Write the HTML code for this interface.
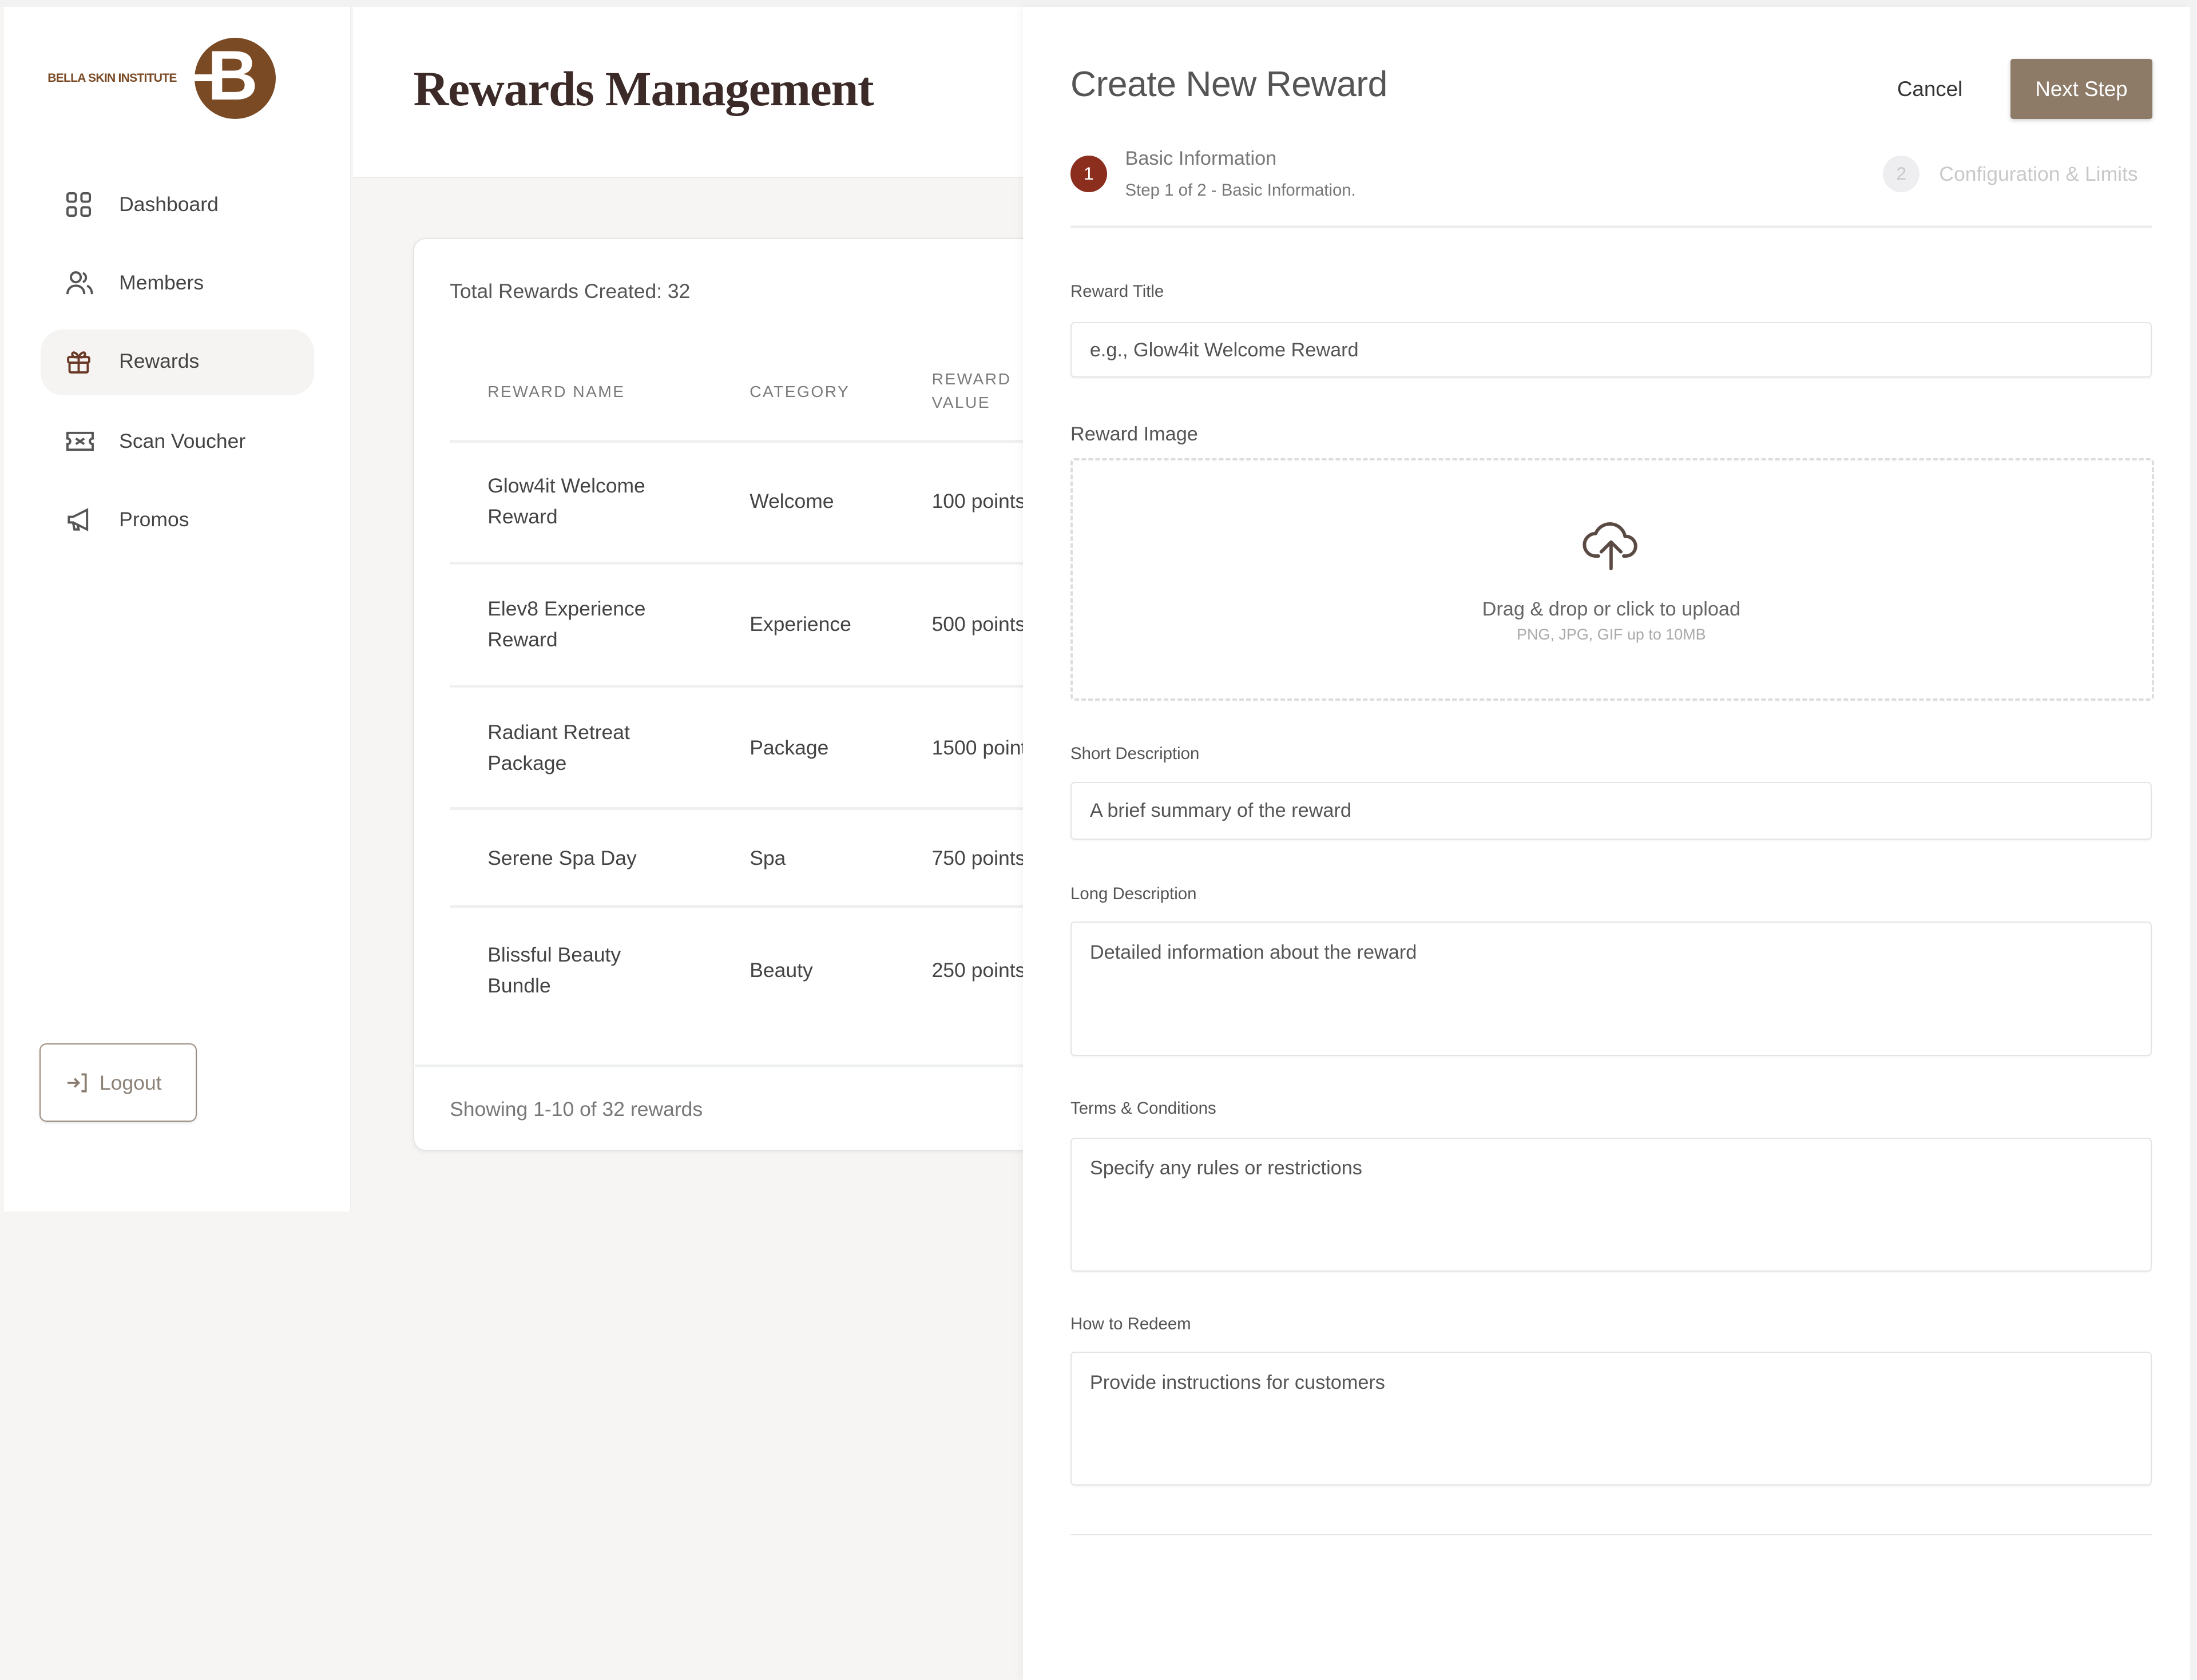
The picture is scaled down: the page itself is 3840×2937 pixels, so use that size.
<!DOCTYPE html>
<html><head><meta charset="utf-8"><style>
html,body{margin:0;padding:0;width:3840px;height:2937px;overflow:hidden;background:#f6f5f3;}
#w{position:relative;width:1568px;height:1200px;zoom:2.44898;font-family:"Liberation Sans",sans-serif;background:#f6f5f3;overflow:hidden;}
.a{position:absolute;white-space:nowrap;}
.nav{font-size:14.5px;color:#444;line-height:20px;}
.hd{font-size:11.5px;color:#7a7a7a;letter-spacing:1px;line-height:17px;}
.td{font-size:14.5px;color:#444;line-height:22px;}
.hr{position:absolute;left:321px;width:420px;height:2px;background:#eef0f2;}
.lbl{font-size:12px;color:#555;line-height:16px;}
.inp{position:absolute;left:764px;width:770px;border:1px solid #e4e4e4;border-radius:3px;background:#fff;box-shadow:0 1px 1px rgba(0,0,0,.04);}
.ph{position:absolute;left:13px;font-size:14px;color:#555;line-height:18px;}
</style></head><body><div id="w">
<div class="a" style="left:0;top:0;width:1568px;height:5px;background:#f2f2f2"></div>
<div class="a" style="left:3px;top:5px;width:247px;height:860px;background:#fff;border-right:1px solid #eee"></div>
<div class="a" style="left:139px;top:27px;width:58px;height:58px;border-radius:50%;background:#7a4a25"></div>
<div class="a" style="left:130px;top:53px;width:24px;height:5px;background:#fff"></div>
<div class="a" style="left:34px;top:51px;font-size:8.6px;font-weight:bold;color:#7a4a25;letter-spacing:-.3px;line-height:10px">BELLA SKIN INSTITUTE</div>
<div class="a" style="left:148px;top:24px;font-size:50px;line-height:60px;font-weight:bold;color:#fff">B</div>
<div class="a" style="left:29px;top:235px;width:195px;height:47px;border-radius:16px;background:#f6f4f2"></div>
<svg class="a" style="left:46px;top:136px" width="20" height="20" viewBox="0 0 20 20" fill="none" stroke="#555" stroke-width="1.6"><rect x="2" y="2" width="6" height="6" rx="1.5"/><rect x="12" y="2" width="6" height="6" rx="1.5"/><rect x="2" y="12" width="6" height="6" rx="1.5"/><rect x="12" y="12" width="6" height="6" rx="1.5"/></svg>
<div class="a nav" style="left:85px;top:136px">Dashboard</div>
<svg class="a" style="left:46px;top:192px" width="22" height="20" viewBox="0 0 22 20" fill="none" stroke="#555" stroke-width="1.6"><circle cx="8" cy="6" r="3.5"/><path d="M2 18c0-4 3-6 6-6s6 2 6 6"/><path d="M13 3a3.5 3.5 0 0 1 0 6.5M16 12c2 1 3.5 3 3.5 6"/></svg>
<div class="a nav" style="left:85px;top:192px">Members</div>
<svg class="a" style="left:46px;top:248px" width="20" height="20" viewBox="0 0 20 20" fill="none" stroke="#6a3a28" stroke-width="1.6"><rect x="2.5" y="7" width="15" height="4" rx="1"/><rect x="3.5" y="11" width="13" height="7" rx="1"/><path d="M10 7v11"/><path d="M10 7C8 3 5 3 5.5 5.5S10 7 10 7zM10 7c2-4 5-4 4.5-1.5S10 7 10 7z"/></svg>
<div class="a nav" style="left:85px;top:248px">Rewards</div>
<svg class="a" style="left:46px;top:305px" width="22" height="20" viewBox="0 0 22 20" fill="none" stroke="#555" stroke-width="1.6"><path d="M2 4h18v4a2 2 0 0 0 0 4v4H2v-4a2 2 0 0 0 0-4z"/><path d="M8 8l6 4M8 12l6-4"/></svg>
<div class="a nav" style="left:85px;top:305px">Scan Voucher</div>
<svg class="a" style="left:46px;top:361px" width="22" height="20" viewBox="0 0 22 20" fill="none" stroke="#555" stroke-width="1.6"><path d="M3 8v4h3l10 5V3L6 8z"/><path d="M6 12l1 5h3l-1-4"/></svg>
<div class="a nav" style="left:85px;top:361px">Promos</div>
<div class="a" style="left:28px;top:745px;width:111px;height:54px;border:1px solid #9a8c7e;border-radius:5px;box-shadow:0 1px 2px rgba(0,0,0,.1)"></div>
<svg class="a" style="left:46px;top:764px" width="18" height="18" viewBox="0 0 18 18" fill="none" stroke="#8a7c6e" stroke-width="1.5"><path d="M2 9h8M7 6l3 3-3 3M12 3h3v12h-3"/></svg>
<div class="a" style="left:71px;top:763px;font-size:14.5px;color:#8a8075;line-height:20px">Logout</div>
<div class="a" style="left:252px;top:5px;width:480px;height:121px;background:#fff;border-bottom:1px solid #ececec"></div>
<div class="a" style="left:295px;top:41px;font-family:'Liberation Serif',serif;font-size:35px;line-height:46px;color:#3b2a27;font-weight:bold;letter-spacing:-.5px">Rewards Management</div>
<div class="a" style="left:295px;top:170px;width:460px;height:650px;background:#fff;border:1px solid #e6e6e6;border-radius:9px;box-shadow:0 1px 3px rgba(0,0,0,.06)"></div>
<div class="a" style="left:321px;top:198px;font-size:14.5px;color:#555;line-height:20px">Total Rewards Created: 32</div>
<div class="a hd" style="left:348px;top:271px">REWARD NAME</div>
<div class="a hd" style="left:535px;top:271px">CATEGORY</div>
<div class="a hd" style="left:665px;top:262px">REWARD<br>VALUE</div>
<div class="hr" style="top:314px"></div>
<div class="a td" style="left:348px;top:336px">Glow4it Welcome<br>Reward</div><div class="a td" style="left:535px;top:347px">Welcome</div><div class="a td" style="left:665px;top:347px">100 points</div>
<div class="hr" style="top:401px"></div>
<div class="a td" style="left:348px;top:424px">Elev8 Experience<br>Reward</div><div class="a td" style="left:535px;top:435px">Experience</div><div class="a td" style="left:665px;top:435px">500 points</div>
<div class="hr" style="top:489px"></div>
<div class="a td" style="left:348px;top:512px">Radiant Retreat<br>Package</div><div class="a td" style="left:535px;top:523px">Package</div><div class="a td" style="left:665px;top:523px">1500 points</div>
<div class="hr" style="top:576px"></div>
<div class="a td" style="left:348px;top:602px">Serene Spa Day</div><div class="a td" style="left:535px;top:602px">Spa</div><div class="a td" style="left:665px;top:602px">750 points</div>
<div class="hr" style="top:646px"></div>
<div class="a td" style="left:348px;top:671px">Blissful Beauty<br>Bundle</div><div class="a td" style="left:535px;top:682px">Beauty</div><div class="a td" style="left:665px;top:682px">250 points</div>
<div class="a" style="left:296px;top:760px;width:450px;height:2px;background:#eef0f2"></div>
<div class="a" style="left:321px;top:782px;font-size:14.5px;color:#777;line-height:20px">Showing 1-10 of 32 rewards</div>
<div class="a" style="left:730px;top:5px;width:833px;height:1195px;background:#fff;box-shadow:-2px 0 6px rgba(0,0,0,.04)"></div>
<div class="a" style="left:764px;top:44px;font-size:25.5px;line-height:32px;color:#555;letter-spacing:-.2px">Create New Reward</div>
<div class="a" style="left:1354px;top:54px;font-size:15px;color:#333;line-height:20px">Cancel</div>
<div class="a" style="left:1435px;top:42px;width:101px;height:43px;background:#8d7b68;border-radius:2px;box-shadow:0 1px 3px rgba(0,0,0,.2);color:#fff;font-size:15px;line-height:43px;text-align:center">Next Step</div>
<div class="a" style="left:764px;top:111px;width:26px;height:26px;border-radius:50%;background:#8b2e1e;color:#fff;font-size:13px;line-height:26px;text-align:center">1</div>
<div class="a" style="left:803px;top:104px;font-size:14px;color:#777;line-height:18px">Basic Information</div>
<div class="a" style="left:803px;top:128px;font-size:12px;color:#777;line-height:16px">Step 1 of 2 - Basic Information.</div>
<div class="a" style="left:1344px;top:111px;width:26px;height:26px;border-radius:50%;background:#eeeef0;color:#c8c8c8;font-size:13px;line-height:26px;text-align:center">2</div>
<div class="a" style="left:1384px;top:115px;font-size:14.5px;color:#c8c8c8;line-height:18px">Configuration &amp; Limits</div>
<div class="a" style="left:764px;top:161px;width:772px;height:2px;background:#eeeeee"></div>
<div class="a lbl" style="left:764px;top:200px">Reward Title</div>
<div class="inp" style="top:230px;height:38px"><div class="ph" style="top:10px">e.g., Glow4it Welcome Reward</div></div>
<div class="a" style="left:764px;top:301px;font-size:14px;color:#555;line-height:18px">Reward Image</div>
<div class="a" style="left:764px;top:327px;width:770px;height:170px;border:2px dashed #ddd;border-radius:3px"></div>
<svg class="a" style="left:1128px;top:368px" width="44" height="40" viewBox="0 0 44 40" fill="none" stroke="#5a4a44" stroke-width="2.4" stroke-linecap="round" stroke-linejoin="round"><path d="M13 29H11A8 8 0 0 1 11 13a11 11 0 0 1 21 2 7 7 0 0 1 1 14h-2"/><path d="M22 38V20M15 26l7-7 7 7"/></svg>
<div class="a" style="left:764px;top:426px;width:772px;text-align:center;font-size:14px;color:#666;line-height:18px">Drag &amp; drop or click to upload</div>
<div class="a" style="left:764px;top:446px;width:772px;text-align:center;font-size:11px;color:#aaa;line-height:14px">PNG, JPG, GIF up to 10MB</div>
<div class="a lbl" style="left:764px;top:530px">Short Description</div>
<div class="inp" style="top:558px;height:40px"><div class="ph" style="top:11px">A brief summary of the reward</div></div>
<div class="a lbl" style="left:764px;top:630px">Long Description</div>
<div class="inp" style="top:658px;height:94px"><div class="ph" style="top:12px">Detailed information about the reward</div></div>
<div class="a lbl" style="left:764px;top:783px">Terms &amp; Conditions</div>
<div class="inp" style="top:812px;height:94px"><div class="ph" style="top:12px">Specify any rules or restrictions</div></div>
<div class="a lbl" style="left:764px;top:937px">How to Redeem</div>
<div class="inp" style="top:965px;height:94px"><div class="ph" style="top:12px">Provide instructions for customers</div></div>
<div class="a" style="left:764px;top:1095px;width:772px;height:1px;background:#e6e6e6"></div>
<div class="a" style="left:1563px;top:0;width:5px;height:1200px;background:#f2f2f2"></div>
</div></body></html>
